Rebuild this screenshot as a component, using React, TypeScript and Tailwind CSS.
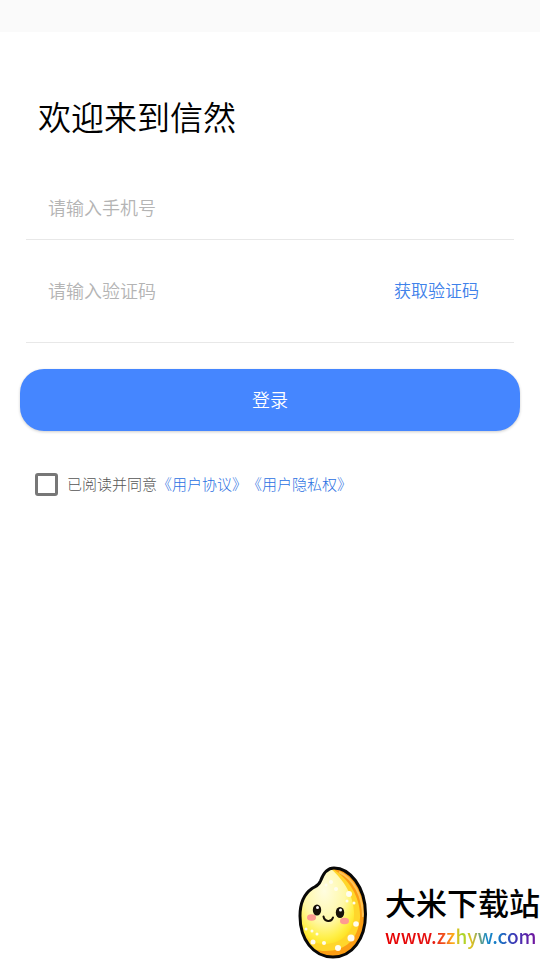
import { useState } from 'react';

const GRAIN_OUTLINE =
  'M39 6C54 6 70.500 24 70.500 52C70.500 77 57 95 38 95C18 95 5 77 5 54C5 42 9 32 17 26.500C21 24 23.500 24 25.500 19C28 12 32 6 39 6Z';

function RiceMascot() {
  return (
    <svg viewBox="0 0 80 98" className="h-[98px] w-20 shrink-0" aria-hidden="true">
      <defs>
        <clipPath id="grain">
          <path d={GRAIN_OUTLINE} />
        </clipPath>
        <radialGradient id="shine" cx="0.45" cy="0.35" r="0.7">
          <stop offset="0" stopColor="#fffde0" />
          <stop offset="0.55" stopColor="#fff8a8" />
          <stop offset="0.82" stopColor="#fff04a" />
          <stop offset="1" stopColor="#ffe01a" />
        </radialGradient>
      </defs>
      <g clipPath="url(#grain)">
        <rect width="80" height="98" fill="#fb9d14" />
        <path d="M38 7C54 17 66 36 65 56C63 78 50 89 31 89C20 89 9 84 3 74L0 0H38Z" fill="#ffd62b" />
        <path d="M36 7C49 18 60 35 59 54C58 72 45 82 29 82C19 82 11 76 5 65V0H36Z" fill="url(#shine)" />
        <path d="M44 10C59 17 68 34 68 55" fill="none" stroke="#ffc456" strokeWidth="2" />
        <g fill="#fffdf0">
          <circle cx="36" cy="20" r="2" />
          <circle cx="31" cy="23" r="1.500" />
          <circle cx="41" cy="27" r="2" />
          <circle cx="54" cy="32" r="3" />
          <circle cx="52" cy="39" r="1.500" />
          <circle cx="59" cy="41" r="1.500" />
          <circle cx="61" cy="62" r="2.800" />
          <circle cx="56" cy="76" r="3.500" />
          <circle cx="43" cy="86" r="3" />
          <circle cx="29" cy="81" r="2" />
          <circle cx="18" cy="80" r="2.500" />
          <circle cx="11" cy="67" r="1.500" />
          <circle cx="17" cy="69" r="1.500" />
          <circle cx="22" cy="72" r="1.500" />
        </g>
      </g>
      <path d={GRAIN_OUTLINE} fill="none" stroke="#080808" strokeWidth="3" />
      <ellipse cx="16.500" cy="55.500" rx="4.500" ry="3.200" fill="#ff9a90" />
      <ellipse cx="49.500" cy="59" rx="4.500" ry="3.200" fill="#ff9a90" />
      <ellipse cx="22" cy="48" rx="4.200" ry="5.600" fill="#171008" />
      <ellipse cx="45" cy="50.500" rx="4.200" ry="5.600" fill="#171008" />
      <circle cx="22.500" cy="45.500" r="1.500" fill="white" />
      <circle cx="45.500" cy="48" r="1.500" fill="white" />
      <path d="M28.500 54.500C29.500 60 36.500 60.500 38 55.500" fill="none" stroke="#171008" strokeWidth="2" strokeLinecap="round" />
    </svg>
  );
}

export default function App() {
  const [phone, setPhone] = useState('');
  const [code, setCode] = useState('');
  const [agreed, setAgreed] = useState(false);

  return (
    <div lang="zh-CN" className="flex min-h-screen flex-col bg-white font-['Noto_Sans_CJK_SC',sans-serif]">
      <header className="h-8 bg-[#fafafa]" />

      <main>
        <form onSubmit={(e) => e.preventDefault()}>
          <h1 className="mt-[62px] px-[38px] text-[33px] leading-[44px] font-[350] text-black">欢迎来到信然</h1>

          <div className="mx-[26px] mt-9 flex h-[66px] items-center border-b border-[#e8e8e8] px-[22px]">
            <input
              type="tel"
              aria-label="手机号"
              placeholder="请输入手机号"
              value={phone}
              onChange={(e) => setPhone(e.target.value)}
              className="min-w-0 flex-1 bg-transparent text-lg font-[350] outline-none placeholder:text-[#b4b4b4]"
            />
          </div>

          <div className="mx-[26px] flex h-[103px] items-center border-b border-[#e8e8e8] pr-[35px] pb-[3px] pl-[22px]">
            <input
              type="text"
              aria-label="验证码"
              placeholder="请输入验证码"
              value={code}
              onChange={(e) => setCode(e.target.value)}
              className="min-w-0 flex-1 bg-transparent text-lg font-[350] outline-none placeholder:text-[#b4b4b4]"
            />
            <button type="button" className="shrink-0 text-[17px] font-[350] text-[#3f82ea]">
              获取验证码
            </button>
          </div>

          <div className="mt-[26px] px-5">
            <button
              type="submit"
              className="h-[62px] w-full rounded-3xl bg-[#4586ff] pb-[3px] text-lg font-[350] text-white shadow-[0_1px_3px_rgba(0,0,0,0.2)]"
            >
              登录
            </button>
          </div>

          <div className="mt-[42px] flex items-center px-[35px] text-[15px] font-light">
            <input
              id="agree"
              type="checkbox"
              checked={agreed}
              onChange={(e) => setAgreed(e.target.checked)}
              className="mr-[9px] size-[23px] shrink-0 appearance-none rounded-[3px] border-[3px] border-[#777777] checked:bg-[#4586ff]"
            />
            <label htmlFor="agree" className="text-[#555555]">
              已阅读并同意
            </label>
            <a href="#terms" className="text-[#2a70e2]">《用户协议》</a>
            <a href="#privacy" className="text-[#2a70e2]">《用户隐私权》</a>
          </div>
        </form>
      </main>

      <footer className="mt-auto flex items-center justify-end">
        <RiceMascot />
        <div className="ml-[10px] shrink-0 pt-3">
          <p className="text-[31px] leading-9 font-medium whitespace-nowrap text-black">大米下载站</p>
          <a
            href="#home"
            className="mt-0.5 block w-fit bg-[linear-gradient(90deg,#e60000_0%,#e51010_30%,#f04a1b_38%,#ffae18_45%,#a6d829_51%,#e0c020_57%,#1689c9_67%,#1676c4_75%,#4136b5_86%,#75139d_100%)] bg-clip-text text-[19px] leading-7 font-medium text-transparent"
          >
            www.zzhyw.com
          </a>
        </div>
      </footer>
    </div>
  );
}
